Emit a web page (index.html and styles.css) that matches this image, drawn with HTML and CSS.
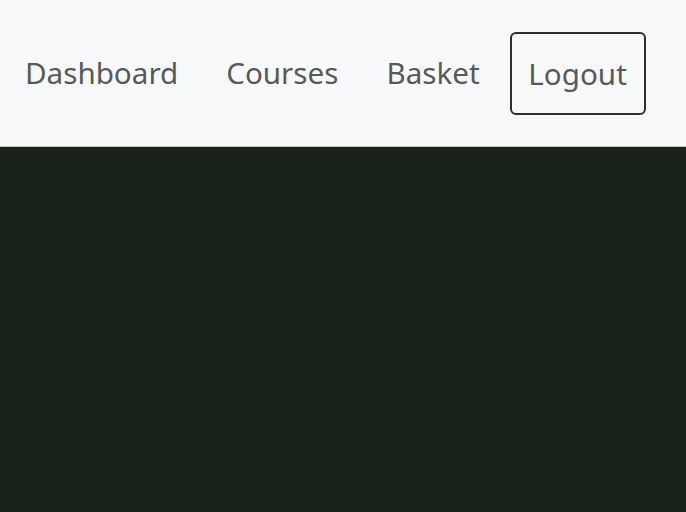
FILE: index.html
```html
<!DOCTYPE html>
<html>
<head>
<meta charset="utf-8">
<link rel="stylesheet" href="styles.css">
</head>
<body>
<nav class="navbar">
  <a class="nav-link" href="#">Dashboard</a>
  <a class="nav-link" href="#">Courses</a>
  <a class="nav-link" href="#">Basket</a>
  <button class="logout">Logout</button>
</nav>
<main class="content"></main>
</body>
</html>
```
FILE: styles.css
```css
html, body {
  margin: 0;
  padding: 0;
  height: 100%;
}
body {
  background: #19221b;
  font-family: "Noto Sans", "Open Sans", sans-serif;
  display: flex;
  flex-direction: column;
}
.navbar {
  height: 147px;
  box-sizing: border-box;
  background: #f8f9fa;
  border-bottom: 1px solid #c4c6c4;
  display: flex;
  align-items: center;
  padding-left: 25px;
  gap: 48px;
}
.nav-link {
  color: #595959;
  font-size: 29.6px;
  text-decoration: none;
  margin-top: -2px;
}
.logout {
  font-family: inherit;
  font-size: 29.6px;
  color: #595959;
  background: transparent;
  border: 2px solid #2f302b;
  border-radius: 6px;
  width: 136px;
  height: 83px;
  margin-left: -18px;
  padding: 0;
}
.content {
  flex: 1;
}
```
